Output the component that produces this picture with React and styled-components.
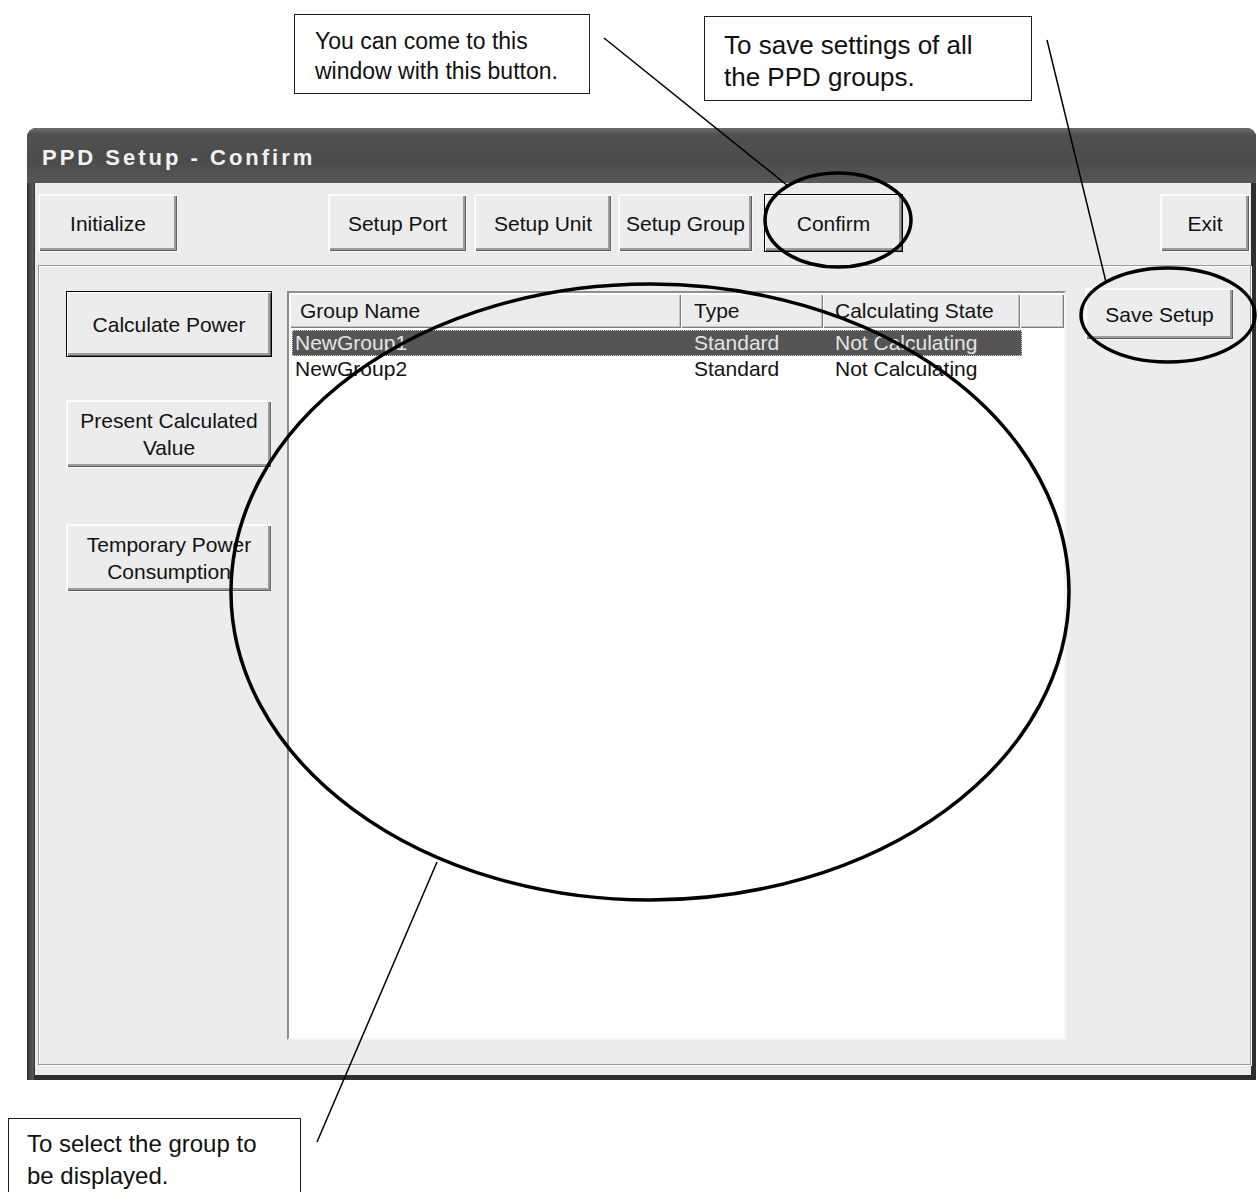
import React from "react";
import styled, { createGlobalStyle } from "styled-components";

const GlobalStyle = createGlobalStyle`
  html, body {
    margin: 0;
    padding: 0;
    background: #ffffff;
  }
  body {
    font-family: "Liberation Sans", Arial, sans-serif;
  }
`;

const Page = styled.div`
  position: relative;
  width: 1258px;
  height: 1192px;
  overflow: hidden;
  box-sizing: border-box;
  padding: 128px 0 0 27px;
  background: #ffffff;
`;

const Window = styled.div`
  width: 1229px;
  height: 952px;
  display: flex;
  flex-direction: column;
  background: #3a3a3a;
  border-radius: 9px 9px 0 0;
  overflow: hidden;
`;

const TitleBar = styled.div`
  height: 55px;
  flex: none;
  display: flex;
  align-items: center;
  padding: 4px 0 0 15px;
  box-sizing: border-box;
  background: linear-gradient(#6e6e6e 0, #505050 12%, #4c4c4c 60%, #575757 100%);
  color: #f2f2f2;
  font-weight: bold;
  font-size: 22px;
  letter-spacing: 3px;
`;

const Frame = styled.div`
  flex: 1;
  display: flex;
  padding: 0 5px 5px 8px;
  background: linear-gradient(90deg, #2e2e2e 0, #5a5a5a 6px, #2e2e2e 8px);
`;

const Client = styled.div`
  flex: 1;
  display: flex;
  flex-direction: column;
  padding: 11px 0 10px 3px;
  background: #ececec;
`;

const Toolbar = styled.div`
  height: 58px;
  display: flex;
  align-items: stretch;
  padding-right: 1px;
`;

const NavGroup = styled.div`
  display: flex;
  margin-left: 150px;
`;

const Button = styled.div`
  box-sizing: border-box;
  width: ${(p) => p.$w}px;
  height: ${(p) => (p.$h ? `${p.$h}px` : "auto")};
  margin-left: ${(p) => p.$ml || 0}px;
  margin-top: ${(p) => p.$mt || 0}px;
  display: flex;
  align-items: center;
  justify-content: center;
  text-align: center;
  flex: none;
  background: #ececec;
  color: #121212;
  font-size: 21px;
  line-height: 27px;
  border: 1px solid ${(p) => (p.$focused ? "#000000" : "#f8f8f8")};
  box-shadow: inset 1px 1px #ffffff, inset -1px -1px #5e5e5e,
    inset -3px -3px #9c9c9c;
`;

const ExitButton = styled(Button)`
  margin-left: auto;
`;

const Panel = styled.div`
  flex: 1;
  margin-top: 13px;
  display: flex;
  align-items: flex-start;
  padding: 22px 14px 23px 27px;
  border: 1px solid #9a9a9a;
  box-shadow: inset 1px 1px #ffffff, 1px 1px #ffffff;
`;

const LeftColumn = styled.div`
  width: 206px;
  flex: none;
  display: flex;
  flex-direction: column;
  padding-top: 3px;
`;

const ListView = styled.div`
  margin: 3px 0 0 15px;
  width: 779px;
  height: 749px;
  flex: none;
  box-sizing: border-box;
  background: #ffffff;
  border: 2px solid;
  border-color: #8e8e8e #f4f4f4 #f4f4f4 #8e8e8e;
  padding: 1px 0 0 1px;
  font-size: 21px;
`;

const HeaderRow = styled.div`
  display: flex;
  height: 34px;
`;

const HeaderCell = styled.div`
  box-sizing: border-box;
  width: ${(p) => p.$w}px;
  padding-left: ${(p) => p.$pl}px;
  display: flex;
  align-items: center;
  background: #ececec;
  color: #141414;
  box-shadow: inset 1px 1px #ffffff, inset -1px -1px #7e7e7e,
    inset -2px -2px #c4c4c4;
`;

const Rows = styled.div`
  padding: 2px 0 0 2px;
`;

const Row = styled.div`
  display: flex;
  width: 730px;
  height: 26px;
  box-sizing: border-box;
  align-items: center;
  background: ${(p) => (p.$selected ? "#555555" : "transparent")};
  color: ${(p) => (p.$selected ? "#e4e4e4" : "#121212")};
  outline: ${(p) => (p.$selected ? "1px dotted #d0d0d0" : "none")};
  outline-offset: -1px;
`;

const Cell = styled.div`
  box-sizing: border-box;
  width: ${(p) => p.$w}px;
  padding-left: ${(p) => p.$pl}px;
  white-space: nowrap;
`;

const RightColumn = styled.div`
  margin-left: 19px;
  flex: none;
`;

const Callout = styled.div`
  position: absolute;
  left: ${(p) => p.$x}px;
  top: ${(p) => p.$y}px;
  width: ${(p) => p.$w}px;
  height: ${(p) => p.$h}px;
  box-sizing: border-box;
  padding: ${(p) => p.$pt}px 0 0 ${(p) => p.$pl}px;
  background: #ffffff;
  border: 1.5px solid #1e1e1e;
  color: #111111;
  font-size: ${(p) => p.$fs}px;
  line-height: ${(p) => p.$lh}px;
`;

const Overlay = styled.svg`
  position: absolute;
  left: 0;
  top: 0;
  pointer-events: none;
`;

const columns = [
  { label: "Group Name", w: 391, hp: 10, rp: 3 },
  { label: "Type", w: 142, hp: 13, rp: 13 },
  { label: "Calculating State", w: 197, hp: 12, rp: 12 },
];

const groups = [
  { name: "NewGroup1", type: "Standard", state: "Not Calculating", selected: true },
  { name: "NewGroup2", type: "Standard", state: "Not Calculating" },
];

export default function App() {
  return (
    <Page>
      <GlobalStyle />
      <Window>
        <TitleBar>PPD Setup - Confirm</TitleBar>
        <Frame>
          <Client>
            <Toolbar>
              <Button $w={140}>Initialize</Button>
              <NavGroup>
                <Button $w={139}>Setup Port</Button>
                <Button $w={138} $ml={7}>Setup Unit</Button>
                <Button $w={135} $ml={6}>Setup Group</Button>
                <Button $w={139} $ml={11} $focused>Confirm</Button>
              </NavGroup>
              <ExitButton $w={90}>Exit</ExitButton>
            </Toolbar>
            <Panel>
              <LeftColumn>
                <Button $w={206} $h={66} $focused>Calculate Power</Button>
                <Button $w={206} $h={68} $mt={43}>
                  Present Calculated
                  <br />
                  Value
                </Button>
                <Button $w={206} $h={68} $mt={56}>
                  Temporary Power
                  <br />
                  Consumption
                </Button>
              </LeftColumn>
              <ListView>
                <HeaderRow>
                  {columns.map((c) => (
                    <HeaderCell key={c.label} $w={c.w} $pl={c.hp}>
                      {c.label}
                    </HeaderCell>
                  ))}
                  <HeaderCell $w={44} $pl={0} />
                </HeaderRow>
                <Rows>
                  {groups.map((g) => (
                    <Row key={g.name} $selected={g.selected}>
                      <Cell $w={389} $pl={columns[0].rp}>{g.name}</Cell>
                      <Cell $w={142} $pl={columns[1].rp}>{g.type}</Cell>
                      <Cell $w={197} $pl={columns[2].rp}>{g.state}</Cell>
                    </Row>
                  ))}
                </Rows>
              </ListView>
              <RightColumn>
                <Button $w={149} $h={52}>Save Setup</Button>
              </RightColumn>
            </Panel>
          </Client>
        </Frame>
      </Window>

      <Overlay width="1258" height="1192" viewBox="0 0 1258 1192">
        <g fill="none" stroke="#000" strokeWidth="1.5">
          <line x1="604" y1="38" x2="788" y2="186" />
          <line x1="1047" y1="40" x2="1106" y2="282" />
          <line x1="317" y1="1142" x2="437" y2="862" />
        </g>
        <g fill="none" stroke="#000" strokeWidth="3.5">
          <ellipse cx="838" cy="220" rx="73" ry="47" />
          <ellipse cx="1168" cy="315" rx="87" ry="47" />
          <ellipse cx="650" cy="592" rx="419" ry="308" />
        </g>
      </Overlay>

      <Callout $x={294} $y={14} $w={296} $h={80} $pt={11} $pl={20} $fs={23} $lh={30}>
        You can come to this
        <br />
        window with this button.
      </Callout>
      <Callout $x={704} $y={16} $w={328} $h={85} $pt={12} $pl={19} $fs={26} $lh={32}>
        To save settings of all
        <br />
        the PPD groups.
      </Callout>
      <Callout $x={8} $y={1118} $w={293} $h={90} $pt={9} $pl={18} $fs={24} $lh={32}>
        To select the group to
        <br />
        be displayed.
      </Callout>
    </Page>
  );
}
